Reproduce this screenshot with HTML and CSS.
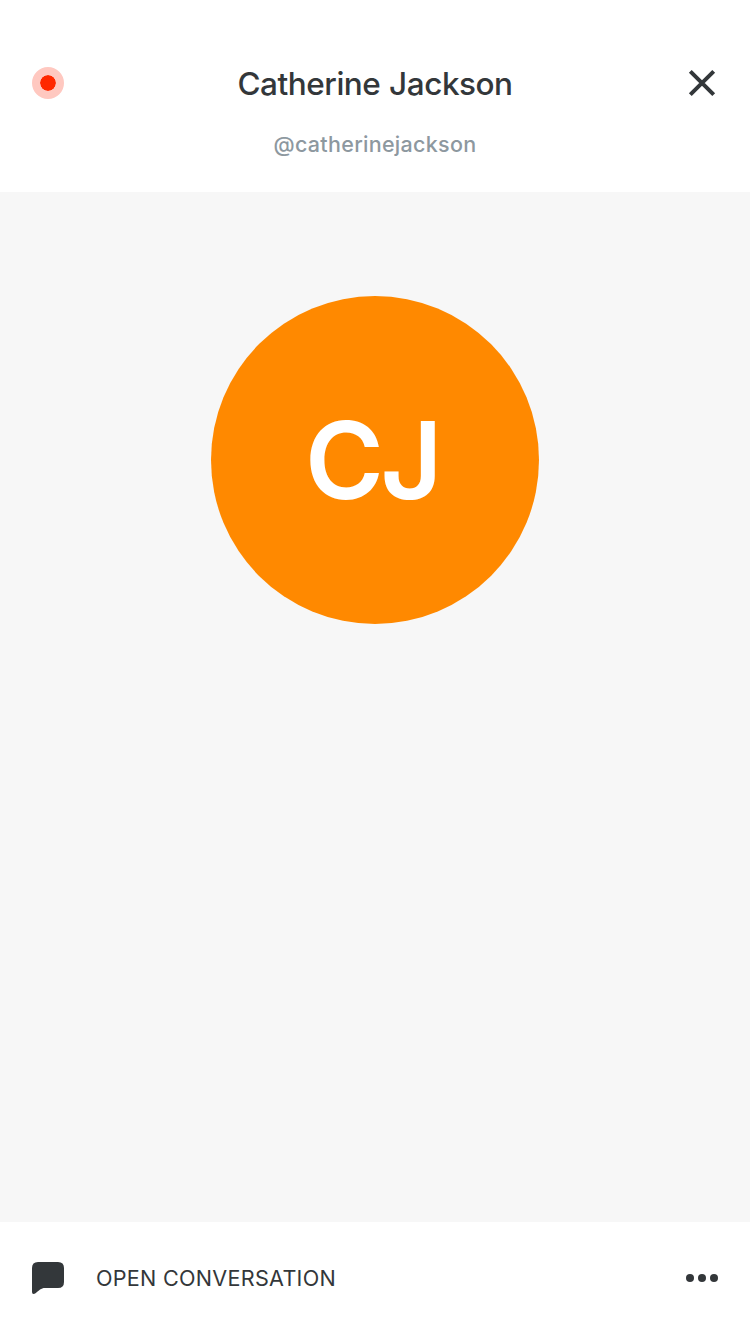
FILE: index.html
```html
<!DOCTYPE html>
<html lang="en">
<head>
<meta charset="utf-8">
<title>Catherine Jackson</title>
<link rel="stylesheet" href="styles.css">
</head>
<body>
<div class="screen">
  <header class="header">
    <span class="status"></span>
    <div class="identity">
      <h1 class="name">Catherine Jackson</h1>
      <p class="handle">@catherinejackson</p>
    </div>
    <button class="icon-button" aria-label="Close">
      <svg width="32" height="32" viewBox="0 0 32 32"><path d="M4.300 4.300L27.700 27.700M27.700 4.300L4.300 27.700" fill="none" stroke="#33373a" stroke-width="4"/></svg>
    </button>
  </header>
  <main class="profile">
    <div class="avatar"><span class="initials">CJ</span></div>
  </main>
  <footer class="footer">
    <button class="conversation">
      <svg width="32" height="32" viewBox="0 0 32 32"><path d="M6 0H26Q32 0 32 6V20Q32 26 26 26H13C9 26 7 28.500 3.500 31.300Q2.500 32 1.500 32Q0 32 0 30V6Q0 0 6 0Z" fill="#33373a"/></svg>
      <span class="label">OPEN CONVERSATION</span>
    </button>
    <button class="icon-button" aria-label="More">
      <svg width="32" height="32" viewBox="0 0 32 32" fill="#33373a"><circle cx="4" cy="16" r="4"/><circle cx="16" cy="16" r="4"/><circle cx="28" cy="16" r="4"/></svg>
    </button>
  </footer>
</div>
</body>
</html>
```
FILE: styles.css
```css
* { box-sizing: border-box; }
body { margin: 0; font-family: Inter, sans-serif; color: #33373a; }
button { border: 0; padding: 0; background: none; color: inherit; font: inherit; }
svg { display: block; }
.screen { width: 750px; height: 1334px; display: flex; flex-direction: column; background: #fff; }
.header { height: 192px; padding: 67px 32px 0; display: flex; align-items: flex-start; justify-content: space-between; }
.status { width: 32px; height: 32px; border: 8px solid #ffc8c0; border-radius: 50%; background: #ff2800; background-clip: padding-box; }
.identity { display: flex; flex-direction: column; align-items: center; gap: 27px; }
.name { margin: 0; font-size: 31.5px; line-height: 34px; font-weight: 450; letter-spacing: -0.47px; word-spacing: 0.8px; white-space: nowrap; }
.handle { margin: 0; font-size: 21.5px; line-height: 32px; font-weight: 500; letter-spacing: 0.29px; color: #8d989f; }
.profile { flex: 1; padding-top: 104px; display: flex; justify-content: center; background: #f7f7f7; }
.avatar { width: 328px; height: 328px; border-radius: 50%; background: #ff8900; display: flex; align-items: center; justify-content: center; }
.initials { color: #fff; font-size: 107px; line-height: 130px; font-weight: 600; letter-spacing: -3.5px; margin-right: 6px; }
.footer { height: 112px; padding: 0 32px; display: flex; align-items: center; justify-content: space-between; }
.conversation { display: flex; align-items: center; gap: 32px; }
.label { font-size: 21.6px; line-height: 32px; letter-spacing: 0.27px; white-space: nowrap; }
```
